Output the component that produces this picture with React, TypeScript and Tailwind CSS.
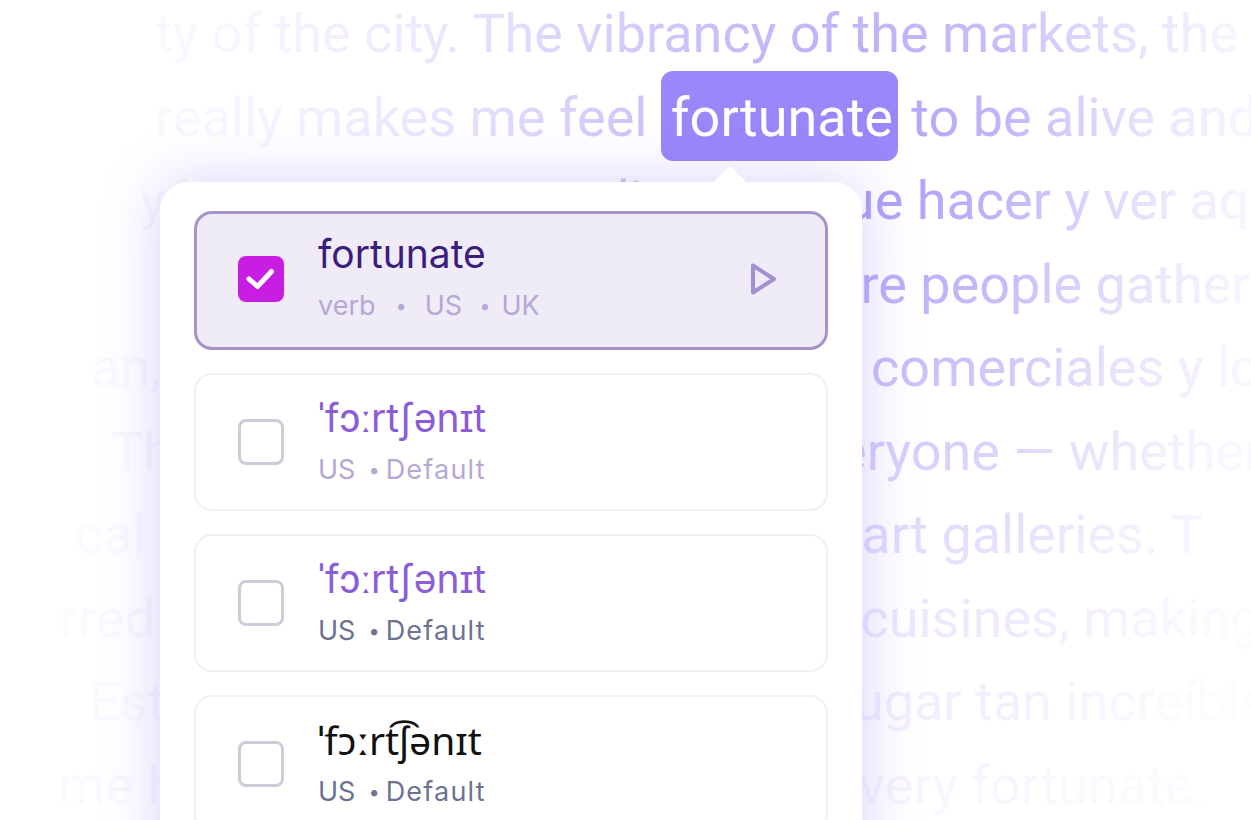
import React from "react";

const lines: { ml: string; text: React.ReactNode }[] = [
  { ml: "ml-[155px]", text: "ty of the city. The vibrancy of the markets, the" },
  {
    ml: "ml-[155px]",
    text: (
      <>
        really makes me feel{" "}
        <span className="rounded-[12px] bg-[#9b86fa] pb-[12px] pl-[10px] pr-[5px] pt-[15px] text-white">fortunate</span>{" "}
        to be alive and
      </>
    ),
  },
  { ml: "ml-[140px]", text: "y hay tantas cosas diversas que hacer y ver aquí" },
  { ml: "ml-[160px]", text: "a lively little town square where people gather" },
  { ml: "ml-[91px]", text: "an, los mercadillos y los centros comerciales y los" },
  { ml: "ml-[111px]", text: "There is something here for everyone — whether" },
  { ml: "ml-[75px]", text: "cal live music venues or the new art galleries. T" },
  { ml: "ml-[60px]", text: "rred to its diverse range of global cuisines, making" },
  { ml: "ml-[89px]", text: "Estar en este pequeño y bonito lugar tan increíble" },
  { ml: "ml-[58px]", text: "me hace sentir muy afortunada y very fortunate." },
];

const Checkbox = ({ checked }: { checked?: boolean }) =>
  checked ? (
    <div className="flex h-[46px] w-[46px] shrink-0 items-center justify-center rounded-[8px] bg-[#c81de2]">
      <svg width="46" height="46" viewBox="0 0 46 46" fill="none">
        <path d="M11 23l8.5 7.5L33.5 15.5" stroke="#fff" strokeWidth="5" strokeLinecap="round" strokeLinejoin="round" />
      </svg>
    </div>
  ) : (
    <div className="h-[46px] w-[46px] shrink-0 rounded-[8px] border-[3px] border-[#cbced9]" />
  );

const Dot = ({ className }: { className: string }) => <span className={`text-[20px] ${className}`}>•</span>;

const Row = ({ title, titleClass, metaColor }: { title: string; titleClass: string; metaColor: string }) => (
  <div className="flex h-[138px] shrink-0 items-center gap-[34px] rounded-[18px] border-2 border-[#f0f1f5] bg-white pl-[42px]">
    <Checkbox />
    <div className="flex flex-col">
      <div className={`text-[39px] leading-[46px] ${titleClass}`}>{title}</div>
      <div className={`mt-[9px] flex items-center text-[27px] leading-[40px] ${metaColor}`}>
        <span>US</span>
        <Dot className="ml-[13px] mr-[6px]" />
        <span className="tracking-[1.2px]">Default</span>
      </div>
    </div>
  </div>
);

export default function App() {
  return (
    <div className="relative h-[820px] w-full overflow-hidden bg-white font-['Roboto',sans-serif]">
      <div className="-mt-[8px] whitespace-nowrap bg-clip-text text-[54px] leading-[83.5px] text-transparent [background-image:linear-gradient(to_right,rgba(255,255,255,0.55)_0px,transparent_220px,transparent_1000px,rgba(255,255,255,0.7)_1251px),radial-gradient(ellipse_650px_640px_at_860px_180px,#a999f8_0%,#c0b4fa_22%,#d8d0fc_45%,#ece8fe_70%,#f8f7ff_100%)]">
        {lines.map((l, i) => (
          <div key={i} className={l.ml}>
            {l.text}
          </div>
        ))}
      </div>

      <div className="absolute left-[160px] top-[182px] h-[700px] w-[702px] rounded-t-[28px] bg-white px-[34px] pt-[29px] font-['Inter',sans-serif] shadow-[0_0_60px_rgba(120,90,240,0.28)]">
        <div className="absolute -top-[11px] left-[557px] h-[26px] w-[26px] rotate-45 rounded-[3px] bg-white" />
        <div className="relative flex flex-col gap-[23px]">
          <div className="flex h-[139px] items-center gap-[34px] rounded-[18px] border-[3px] border-[#a693ca] bg-[#f0ecf7] pb-[4px] pl-[41px] pr-[47px]">
            <Checkbox checked />
            <div className="flex flex-1 flex-col">
              <div className="text-[39px] leading-[46px] text-[#3a1d7c]">fortunate</div>
              <div className="mt-[9px] flex items-center text-[27px] leading-[40px] text-[#b5a8d8]">
                <span>verb</span>
                <Dot className="ml-[20px] mr-[18px]" />
                <span>US</span>
                <Dot className="ml-[17px] mr-[11px]" />
                <span>UK</span>
              </div>
            </div>
            <svg width="30" height="34" viewBox="0 0 30 34" fill="none">
              <path d="M5 3.5L26 17L5 30.5Z" stroke="#a38fcf" strokeWidth="4" strokeLinejoin="round" />
            </svg>
          </div>
          <Row title="ˈfɔːrtʃənɪt" titleClass="text-[#8b5dd8]" metaColor="text-[#b5a8d8]" />
          <Row title="ˈfɔːrtʃənɪt" titleClass="text-[#8b5dd8]" metaColor="text-[#6b7292]" />
          <Row title="ˈfɔːrt͡ʃənɪt" titleClass="font-['Noto_Sans',sans-serif] text-[#111111]" metaColor="text-[#6b7292]" />
        </div>
      </div>
    </div>
  );
}
